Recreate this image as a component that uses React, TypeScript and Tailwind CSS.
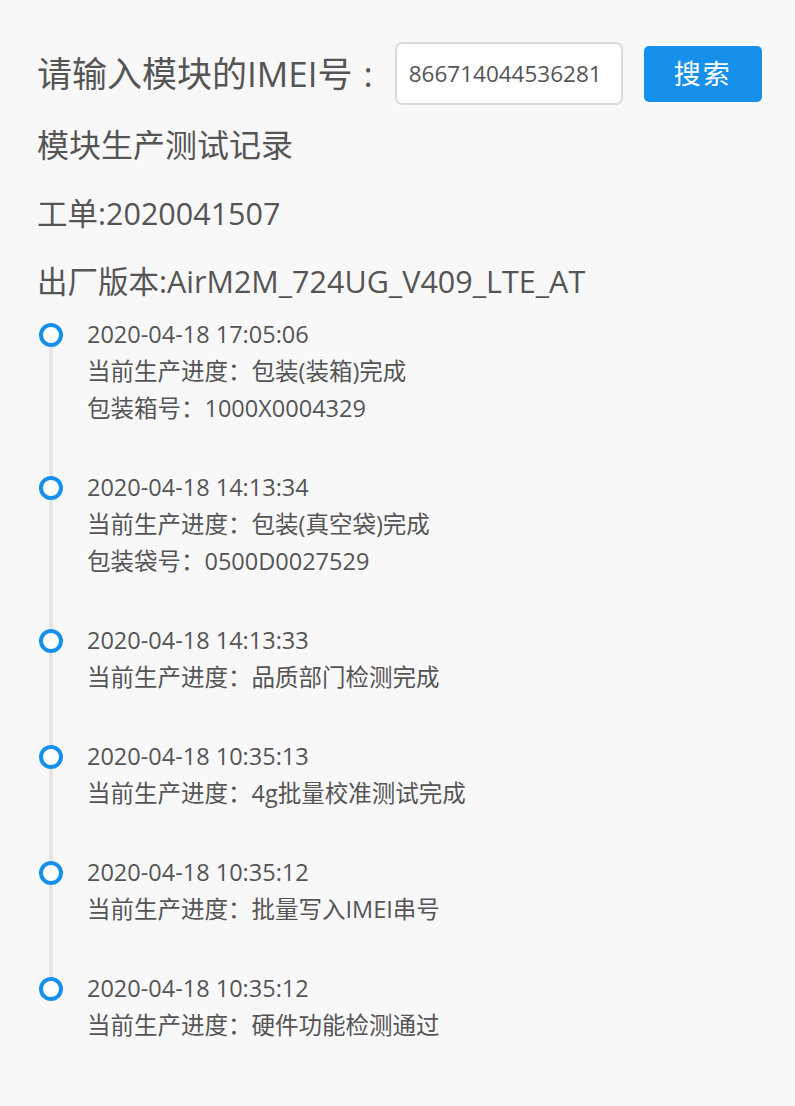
type Record = {
  time: string;
  lines: string[];
};

const records: Record[] = [
  {
    time: "2020-04-18 17:05:06",
    lines: ["当前生产进度：包装(装箱)完成", "包装箱号：1000X0004329"],
  },
  {
    time: "2020-04-18 14:13:34",
    lines: ["当前生产进度：包装(真空袋)完成", "包装袋号：0500D0027529"],
  },
  {
    time: "2020-04-18 14:13:33",
    lines: ["当前生产进度：品质部门检测完成"],
  },
  {
    time: "2020-04-18 10:35:13",
    lines: ["当前生产进度：4g批量校准测试完成"],
  },
  {
    time: "2020-04-18 10:35:12",
    lines: ["当前生产进度：批量写入IMEI串号"],
  },
  {
    time: "2020-04-18 10:35:12",
    lines: ["当前生产进度：硬件功能检测通过"],
  },
];

export default function App() {
  return (
    <div className="min-h-screen bg-[#f8f8f8] text-[#555] font-['Open_Sans','Noto_Sans_CJK_SC',sans-serif] pl-[37px] pt-[42px]">
      {/* 搜索栏 */}
      <div className="flex items-center">
        <span className="text-[35px] leading-[48px] whitespace-nowrap">
          请输入模块的IMEI号<span className="ml-[11px]">:</span>
        </span>
        <div className="ml-[22px] w-[228px] h-[63px] bg-white border-2 border-[#dadada] rounded-[7px] flex items-center px-[12px]">
          <span className="text-[22.5px] text-[#555]">866714044536281</span>
        </div>
        <button className="ml-[21px] w-[118px] h-[56px] rounded-[5px] bg-[#1690ea] text-white text-[27px] leading-none tracking-[2px] flex items-center justify-center">
          搜索
        </button>
      </div>

      {/* 基本信息 */}
      <h2 className="mt-[16px] text-[32px] leading-[48px]">模块生产测试记录</h2>
      <p className="mt-[23px] text-[30.5px] leading-[42px]">工单:2020041507</p>
      <p className="mt-[26px] text-[30.5px] leading-[42px]">出厂版本:AirM2M_724UG_V409_LTE_AT</p>

      {/* 时间线 */}
      <ul className="mt-[14px] ml-[1px]">
        {records.map((r, i) => (
          <li key={i} className="flex">
            <div className="w-[26px] flex flex-col items-center">
              <div className={"w-[4px] h-[7px] " + (i === 0 ? "bg-transparent" : "bg-[#e6e6e6]")} />
              <div className="w-[24px] h-[24px] rounded-full border-[4px] border-[#1690ea] bg-white shrink-0" />
              <div className={"w-[4px] flex-1 " + (i === records.length - 1 ? "bg-transparent" : "bg-[#e6e6e6]")} />
            </div>
            <div className="ml-[23px] pb-[42px] text-[23.5px] leading-[37px]">
              <div>{r.time}</div>
              {r.lines.map((l, j) => (
                <div key={j}>{l}</div>
              ))}
            </div>
          </li>
        ))}
      </ul>
    </div>
  );
}
